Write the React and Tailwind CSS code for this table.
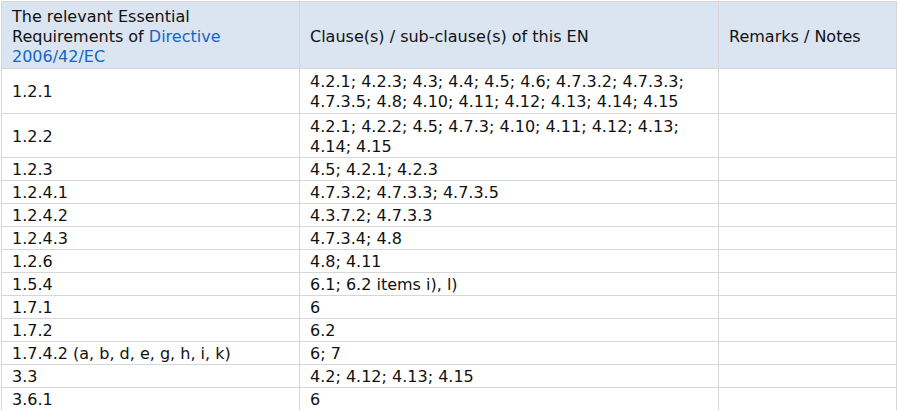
import React from 'react';

const rows = [
  { req: '1.2.1', clauses: '4.2.1; 4.2.3; 4.3; 4.4; 4.5; 4.6; 4.7.3.2; 4.7.3.3; 4.7.3.5; 4.8; 4.10; 4.11; 4.12; 4.13; 4.14; 4.15', h: 'h-[45px]' },
  { req: '1.2.2', clauses: '4.2.1; 4.2.2; 4.5; 4.7.3; 4.10; 4.11; 4.12; 4.13; 4.14; 4.15', h: 'h-[44px]' },
  { req: '1.2.3', clauses: '4.5; 4.2.1; 4.2.3', h: 'h-[23px]' },
  { req: '1.2.4.1', clauses: '4.7.3.2; 4.7.3.3; 4.7.3.5', h: 'h-[23px]' },
  { req: '1.2.4.2', clauses: '4.3.7.2; 4.7.3.3', h: 'h-[22px]' },
  { req: '1.2.4.3', clauses: '4.7.3.4; 4.8', h: 'h-[23px]' },
  { req: '1.2.6', clauses: '4.8; 4.11', h: 'h-[23px]' },
  { req: '1.5.4', clauses: '6.1; 6.2 items i), l)', h: 'h-[22px]' },
  { req: '1.7.1', clauses: '6', h: 'h-[23px]' },
  { req: '1.7.2', clauses: '6.2', h: 'h-[23px]' },
  { req: '1.7.4.2 (a, b, d, e, g, h, i, k)', clauses: '6; 7', h: 'h-[23px]' },
  { req: '3.3', clauses: '4.2; 4.12; 4.13; 4.15', h: 'h-[22px]' },
  { req: '3.6.1', clauses: '6', h: 'h-[22px]' },
];

export default function App() {
  return (
    <div className="w-[899px] h-[410px] bg-white pl-px pt-px font-['DejaVu_Sans',sans-serif] text-[16px] leading-[20px] text-[#111]">
      <table className="w-[895px] border-collapse table-fixed">
        <colgroup>
          <col className="w-[298px]" />
          <col className="w-[419px]" />
          <col className="w-[178px]" />
        </colgroup>
        <thead>
          <tr className="h-[67px] bg-[#dbe5f1]">
            <th className="border border-[#d6d6d6] px-[10px] pt-[4px] text-left font-normal align-middle">
              The relevant Essential
              <br />
              Requirements of <span className="text-[#1466c4]">Directive</span>
              <br />
              <span className="text-[#1466c4]">2006/42/EC</span>
            </th>
            <th className="border border-[#d6d6d6] px-[10px] pt-[4px] text-left font-normal align-middle">
              Clause(s) / sub-clause(s) of this EN
            </th>
            <th className="border border-[#d6d6d6] px-[10px] pt-[4px] text-left font-normal align-middle">
              Remarks / Notes
            </th>
          </tr>
        </thead>
        <tbody>
          {rows.map((r) => (
            <tr key={r.req} className={r.h}>
              <td className="border border-[#d6d6d6] px-[10px] pt-[2px] align-middle">{r.req}</td>
              <td className="border border-[#d6d6d6] px-[10px] pt-[2px] align-middle">{r.clauses}</td>
              <td className="border border-[#d6d6d6] px-[10px] align-middle"></td>
            </tr>
          ))}
        </tbody>
      </table>
    </div>
  );
}
